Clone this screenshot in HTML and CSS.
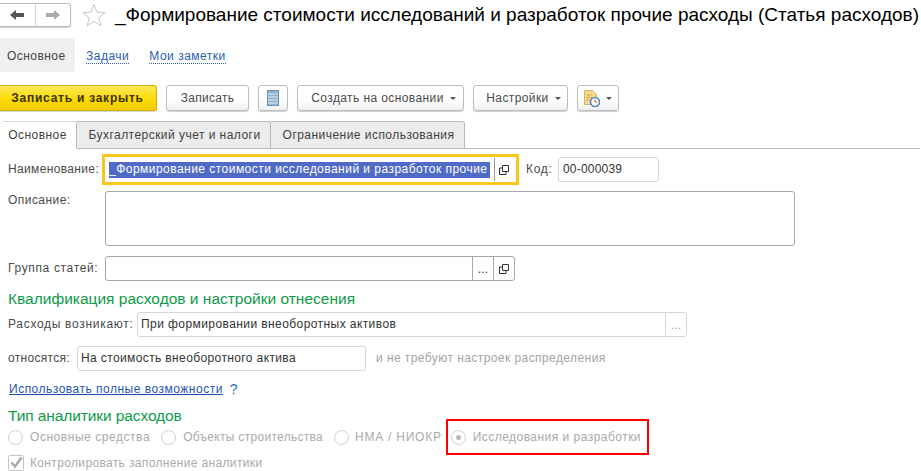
FILE: index.html
```html
<!DOCTYPE html>
<html lang="ru">
<head>
<meta charset="utf-8">
<title>Статья расходов</title>
<link rel="stylesheet" href="styles.css">
</head>
<body>
<div class="frame"></div>
<main class="page">
  <header class="titlebar">
    <div class="nav">
      <span class="nav-btn"><svg width="14" height="12" viewBox="0 0 14 12"><path d="M0 6 6 1v3h8v4H6v3z" fill="#555"/></svg></span>
      <span class="nav-btn"><svg width="14" height="12" viewBox="0 0 14 12"><path d="M14 6 8 1v3H0v4h8v3z" fill="#aaa"/></svg></span>
    </div>
    <svg class="star" width="24" height="24" viewBox="0 0 24 24"><path d="M12 1.500l3 7.600 8 .6-6.200 5.100 2 8-6.800-4.400-6.800 4.400 2-8L1 9.700l8-.6z" fill="#fff" stroke="#c4c8cc" stroke-width="1"/></svg>
    <h1 class="title">_Формирование стоимости исследований и разработок прочие расходы (Статья расходов)</h1>
  </header>

  <nav class="sections">
    <span class="section active">Основное</span>
    <a class="section-link">Задачи</a>
    <a class="section-link">Мои заметки</a>
  </nav>

  <div class="toolbar">
    <button class="btn primary">Записать и закрыть</button>
    <button class="btn w-save">Записать</button>
    <button class="btn w-icon"><svg width="12" height="16" viewBox="0 0 12 16"><rect x=".5" y=".5" width="11" height="15" fill="#8fb2cf" stroke="#6f93b2"/><path d="M1 4h10M1 7h10M1 10h10M1 13h10" stroke="#e4edf4"/></svg></button>
    <button class="btn w-create">Создать на основании<i class="caret"></i></button>
    <button class="btn w-settings">Настройки<i class="caret"></i></button>
    <button class="btn w-report"><svg width="16" height="17" viewBox="0 0 16 17"><path d="M.5.5h8l4 4v10H.5z" fill="#f3d98b" stroke="#d9b45a"/><path d="M2.500 5h5M2.500 7.500h6M2.500 10h3" stroke="#c9a24c"/><circle cx="11" cy="12" r="4.500" fill="#fff" stroke="#4f86c6" stroke-width="1.600"/><path d="M11 9.500V12h2" stroke="#d24b4b" fill="none"/></svg><i class="caret"></i></button>
  </div>

  <div class="tabs">
    <span class="tab tab-active">Основное</span>
    <span class="tab tab-tax">Бухгалтерский учет и налоги</span>
    <span class="tab tab-limit">Ограничение использования</span>
  </div>

  <section class="form">
    <div class="row row-name">
      <label class="label w-label">Наименование:</label>
      <div class="focus">
        <span class="selected">_Формирование стоимости исследований и разработок прочие</span>
        <span class="focus-btn"><svg class="open" width="10" height="10" viewBox="0 0 10 10"><path d="M3.500.5h6v6h-6zM3.500 3H.5v6.500h6.500v-3" fill="none" stroke="#333"/></svg></span>
      </div>
      <label class="label code-label">Код:</label>
      <div class="input light code">00-000039</div>
    </div>

    <div class="row row-desc">
      <label class="label w-label-wide ls-desc">Описание:</label>
      <div class="input area"></div>
    </div>

    <div class="row row-group">
      <label class="label w-label-wide ls-group">Группа статей:</label>
      <div class="input group">
        <span class="fill"></span>
        <span class="cell dots">...</span>
        <span class="cell"><svg width="10" height="10" viewBox="0 0 10 10"><path d="M3.500.5h6v6h-6zM3.500 3H.5v6.500h6.500v-3" fill="none" stroke="#333"/></svg></span>
      </div>
    </div>

    <h2 class="heading first">Квалификация расходов и настройки отнесения</h2>

    <div class="row row-occur">
      <label class="label w-occur">Расходы возникают:</label>
      <div class="input light occur">
        <span class="fill value">При формировании внеоборотных активов</span>
        <span class="cell light-cell dots">...</span>
      </div>
    </div>

    <div class="row row-rel">
      <label class="label w-rel">относятся:</label>
      <div class="input light rel">На стоимость внеоборотного актива</div>
      <span class="muted note">и не требуют настроек распределения</span>
    </div>

    <div class="row row-link">
      <a class="full-link">Использовать полные возможности</a>
      <span class="help">?</span>
    </div>

    <h2 class="heading second">Тип аналитики расходов</h2>

    <div class="row radios">
      <span class="radio r1"><i class="dot"></i>Основные средства</span>
      <span class="radio r2"><i class="dot"></i>Объекты строительства</span>
      <span class="radio r3"><i class="dot"></i>НМА / НИОКР</span>
      <span class="radio r4 marked"><i class="dot on"></i>Исследования и разработки</span>
    </div>

    <div class="row check-row">
      <svg width="16" height="16" viewBox="0 0 16 16"><rect x=".5" y=".5" width="15" height="15" rx="1" fill="#fff" stroke="#c4c4c4"/><path d="M3.500 7.500 7 11.500 13.500 2.500" fill="none" stroke="#a8a8a8" stroke-width="2.400"/></svg>
      <span class="muted">Контролировать заполнение аналитики</span>
    </div>
  </section>
</main>
</body>
</html>
```

FILE: styles.css
```css
* { box-sizing: border-box; }
html, body { margin: 0; height: 471px; overflow: hidden; background: #fff; }
body { font: 12px "Liberation Sans", Arial, sans-serif; color: #4a4a4a; position: relative; }
.frame {
  position: absolute; left: 3px; top: 2px; width: 917px; height: 469px;
  border: 1px solid #b8b8b8; z-index: -1;
}
.page { width: 921px; display: flex; flex-direction: column; }

.titlebar { display: flex; align-items: center; height: 24px; margin-top: 3px; }
.nav {
  display: flex; flex: none; width: 71px; height: 24px; background: #fff;
  border: 1px solid #bdbdbd; border-left: 0; border-radius: 0 3px 3px 0;
  box-shadow: 0 1px 1px #ccc;
}
.nav-btn { flex: 1; display: flex; align-items: center; justify-content: center; }
.nav-btn + .nav-btn { border-left: 1px solid #d4d4d4; }
.star { flex: none; margin-left: 11px; }
.title { margin: 0 0 0 9px; font-size: 19px; font-weight: 400; color: #000; white-space: nowrap; line-height: 24px; }

.sections { display: flex; align-items: center; height: 34px; margin-top: 11px; }
.section { height: 34px; width: 75px; padding-left: 7px; line-height: 36px; background: #f0f0f0; border-radius: 0 4px 4px 0; color: #444; letter-spacing: .45px; }
.section-link { color: #2a5db0; border-bottom: 1px dotted #2a5db0; line-height: 13px; letter-spacing: .5px; margin-top: 3px; }
.section + .section-link { margin-left: 11px; }
.section-link + .section-link { margin-left: 20px; }

.toolbar { display: flex; gap: 9px; height: 26px; margin-top: 13px; }
.btn {
  height: 26px; padding: 0; font: inherit; color: #4a4a4a; letter-spacing: .4px;
  border: 1px solid #bdbdbd; border-radius: 3px;
  background: linear-gradient(#fff 55%, #efefef);
  box-shadow: 0 1px 1px #d0d0d0;
  display: flex; align-items: center; justify-content: center;
}
.primary {
  width: 157px; padding-right: 1px; font-weight: 700; color: #3d3300; letter-spacing: .75px;
  background: linear-gradient(#ffe95a, #fbd900 60%, #f2cb00);
  border: 1px solid #d0b000; border-left: 0; border-radius: 0 3px 3px 0;
}
.w-save { width: 83px; letter-spacing: .3px; }
.w-icon { width: 30px; }
.w-create { width: 167px; padding-left: 6px; }
.w-settings { width: 95px; padding-left: 6px; }
.w-report { width: 42px; }
.caret { width: 0; height: 0; margin-left: 6px; border: 3px solid transparent; border-top: 3px solid #555; border-bottom: 0; }

.tabs { display: flex; height: 28px; margin-top: 10px; margin-left: 3px; width: 917px; border-bottom: 1px solid #b8b8b8; }
.tab { height: 28px; padding-top: 6px; border: 1px solid #b8b8b8; border-left: 0; background: #ececec; color: #3f3f3f; letter-spacing: .46px; text-align: center; border-radius: 0 3px 0 0; }
.tab-active { width: 74px; padding-right: 4px; background: #fff; border-bottom-color: #fff; border-top: 1px solid #d8d8d8; }
.tab-tax { width: 194px; padding-left: 2px; }
.tab-limit { width: 194px; padding-left: 2px; }

.form { display: flex; flex-direction: column; padding-left: 8px; margin-top: 5px; }
.row { display: flex; align-items: center; }
.label { color: #4a4a4a; letter-spacing: .35px; white-space: nowrap; flex: none; padding-bottom: 1px; }

.row-name { height: 31px; }
.w-label { width: 94px; }
.focus { display: flex; align-items: center; width: 417px; height: 31px; padding: 4px; border: 3px solid #f8c81c; }
.selected { width: 381px; height: 16px; line-height: 15px; background: #4f6bc6; color: #fff; letter-spacing: .47px; white-space: nowrap; overflow: hidden; }
.focus-btn { display: flex; align-items: center; justify-content: center; flex: 1; height: 23px; margin-left: 4px; border-left: 1px solid #999; padding-left: 0; }
.code-label { margin-left: 7px; width: 32px; letter-spacing: .7px; }
.input { border: 1px solid #a8a8a8; border-radius: 3px; background: #fff; color: #333; display: flex; align-items: center; letter-spacing: .2px; padding-bottom: 1px; }
.light { border-color: #d6d6d6; }
.code { width: 101px; height: 25px; padding-left: 4px; margin-top: -1px; }

.row-desc { align-items: flex-start; height: 55px; margin-top: 6px; }
.row-desc .label { padding-top: 2px; }
.w-label-wide { width: 97px; }
.ls-desc { letter-spacing: .45px; }
.ls-group { letter-spacing: .65px; }
.area { width: 690px; height: 55px; }

.row-group { height: 25px; margin-top: 10px; }
.group { width: 410px; height: 25px; padding-bottom: 0; }
.fill { flex: 1; padding-left: 4px; white-space: nowrap; }
.value { letter-spacing: .42px; padding-bottom: 2px; }
.cell { width: 21px; height: 23px; flex: none; display: flex; align-items: center; justify-content: center; border-left: 1px solid #a8a8a8; }
.light-cell { border-left-color: #d6d6d6; color: #aaa; }
.occur { padding-bottom: 0; }

.heading { margin: 0; font-size: 15.5px; font-weight: 400; color: #0d9a4a; line-height: 20px; white-space: nowrap; }
.first { margin-top: 8px; }
.row-occur { height: 25px; margin-top: 3px; }
.w-occur { width: 129px; letter-spacing: .7px; padding-bottom: 2px; }
.occur { width: 550px; height: 25px; }
.occur .fill { padding-left: 3px; }
.row-rel { height: 25px; margin-top: 9px; }
.w-rel { width: 69px; letter-spacing: .3px; }
.rel { width: 289px; height: 25px; padding-left: 3px; letter-spacing: .38px; }
.muted { color: #aaa; letter-spacing: .35px; white-space: nowrap; }
.note { margin-left: 10px; color: #a3a3a3; letter-spacing: .43px; padding-bottom: 1px; }
.row-link { height: 16px; margin-top: 10px; }
.full-link { color: #1f55b0; text-decoration: underline; letter-spacing: .5px; margin-left: 1px; }
.help { margin-left: 7px; color: #2a72b8; font-size: 14px; }
.second { margin-top: 10px; height: 18px; line-height: 18px; letter-spacing: -.1px; }

.radios { height: 26px; margin-top: -1px; }
.radio { display: flex; align-items: center; color: #aaa; letter-spacing: .55px; white-space: nowrap; }
.dot { width: 15px; height: 15px; margin-right: 7px; border: 1px solid #cfcfcf; border-radius: 50%; background: #fff; flex: none; display: flex; align-items: center; justify-content: center; }
.on::after { content: ""; width: 5px; height: 5px; border-radius: 50%; background: #b8b8b8; }
.r2, .r3 { margin-left: 11px; }
.r2 { letter-spacing: .3px; }
.r3 { letter-spacing: .75px; }
.r3 .dot { margin-right: 6px; }
.marked { outline: 2px solid #f00; height: 32px; padding: 0 6px 0 3px; margin-left: 6px; letter-spacing: .47px; }

.check-row { height: 16px; margin-top: 5px; gap: 6px; }
```
